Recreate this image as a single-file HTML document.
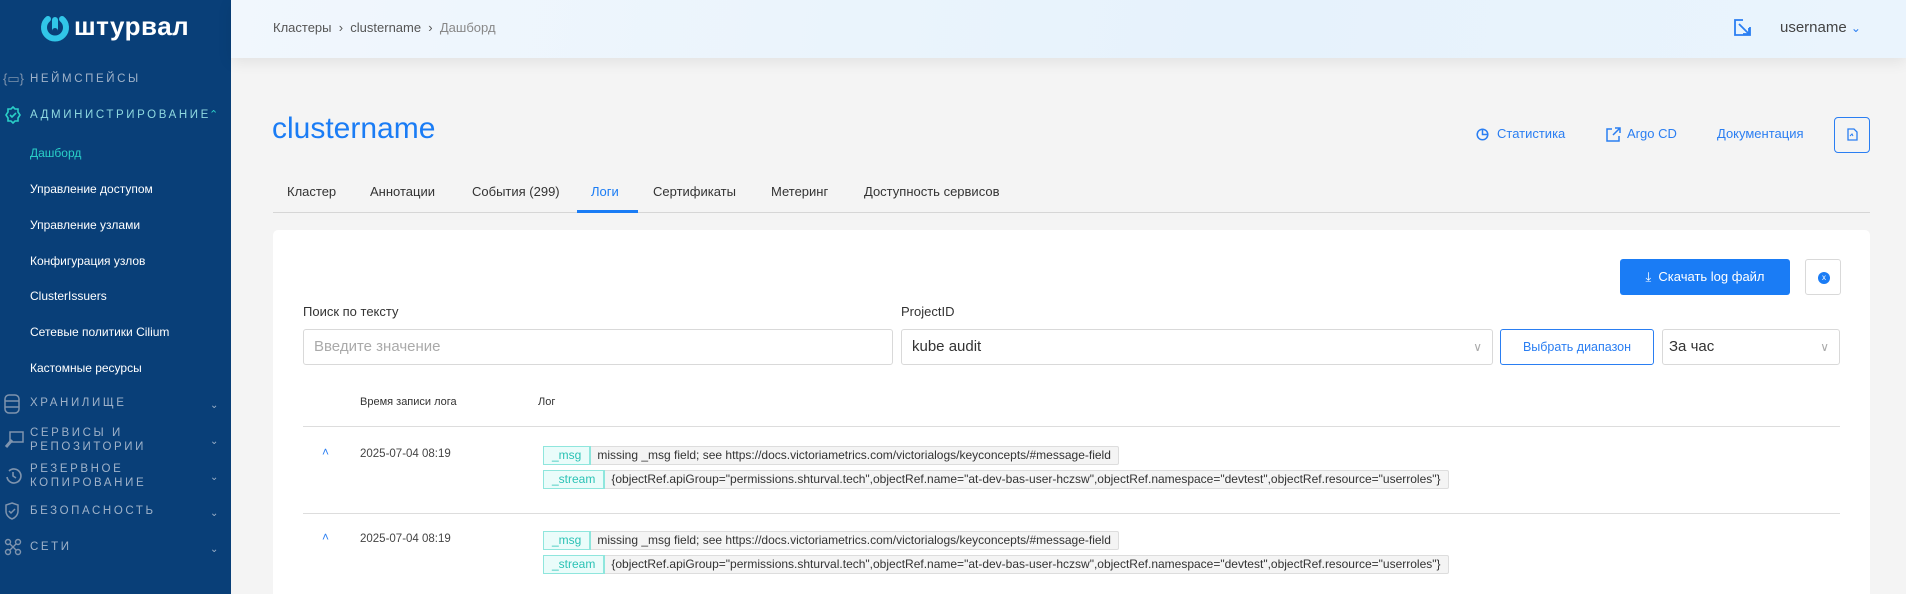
<!DOCTYPE html>
<html><head><meta charset="utf-8"><style>
*{box-sizing:border-box;margin:0;padding:0}
html{width:1906px;height:594px;overflow:hidden}
body{width:1906px;height:594px;overflow:hidden;background:#f4f4f4;font-family:"Liberation Sans",sans-serif;position:relative}
.abs{position:absolute}
#sb{left:0;top:0;width:231px;height:594px;background:#093f78}
.sec{position:absolute;left:30px;font-size:11.5px;letter-spacing:2.6px;color:#9fb2c9;text-transform:uppercase;line-height:14px}
.sub{position:absolute;left:30px;font-size:12px;color:#fff}
.chev{position:absolute;left:210px;color:#9fb2c9;font-size:10px}
.ico{position:absolute;left:4px}
#hdr{left:231px;top:0;width:1675px;height:58px;background:linear-gradient(100deg,#f1f7fd,#e6f2fc 60%,#eaf4fd);box-shadow:0 4px 14px rgba(0,0,0,.08)}
.lnk{position:absolute;top:126px;font-size:13px;color:#2a7ef2}
.tab{position:absolute;top:184px;font-size:13px;color:#333}
#card{left:273px;top:230px;width:1597px;height:364px;background:#fff;border-radius:5px 5px 0 0}
.inp{position:absolute;border:1px solid #d9d9d9;border-radius:3px;height:36px;top:329px;font-size:15px;line-height:34px;padding-left:10px}
.tag{position:absolute;height:19px;border:1px solid #ddd;border-radius:2px;background:#f4f4f4;font-size:12px;line-height:17px;color:#333;white-space:nowrap;display:flex}
.tag b{font-weight:normal;color:#2bc2b5;background:#eafcfa;border-right:1px solid #8fe6dd;padding:0 8px;outline:1px solid #8fe6dd}
.tag span{padding:0 7px}
.up{position:absolute;left:322px;color:#2a7ef2;font-size:12px}
.dt{position:absolute;left:360px;font-size:11.5px;color:#444}
</style></head><body>
<div id="sb" class="abs">
 <svg class="abs" style="left:40px;top:13px" width="30" height="30" viewBox="0 0 30 30"><path d="M8 6a11 11 0 1 0 14 0" stroke="#31c6e8" stroke-width="6" fill="none" stroke-linecap="round"/><rect x="12" y="4" width="6" height="16" rx="3" fill="#31c6e8"/><circle cx="15" cy="18" r="3" fill="#093f78"/></svg>
 <div class="abs" style="left:74px;top:11px;font-size:26px;font-weight:bold;color:#fff;letter-spacing:.5px">штурвал</div>
 <div class="abs" style="left:3px;top:71px;color:#7f94ae;font-size:13px">{▭}</div>
 <div class="sec" style="top:72px">Неймспейсы</div>
 <svg class="ico" style="top:106px" width="18" height="18" viewBox="0 0 18 18"><path d="M9 1l2 2h3v3l2 3-2 3v3h-3l-2 2-2-2H4v-3L2 9l2-3V3h3z" stroke="#2ad0c8" stroke-width="1.6" fill="none"/><path d="M6 9l2 2 4-4" stroke="#2ad0c8" stroke-width="1.6" fill="none"/></svg>
 <div class="sec" style="top:108px;color:#8fd9e0">Администрирование</div>
 <div class="abs" style="left:209px;top:108px;color:#2ad0c8;font-size:11px">⌃</div>
 <div class="sub" style="top:146px;color:#2ad0c8">Дашборд</div>
 <div class="sub" style="top:182px">Управление доступом</div>
 <div class="sub" style="top:218px">Управление узлами</div>
 <div class="sub" style="top:254px">Конфигурация узлов</div>
 <div class="sub" style="top:289px">ClusterIssuers</div>
 <div class="sub" style="top:325px">Сетевые политики Cilium</div>
 <div class="sub" style="top:361px">Кастомные ресурсы</div>
 <svg class="ico" style="top:394px" width="16" height="20" viewBox="0 0 16 20"><rect x="1" y="1" width="14" height="18" rx="4" stroke="#7f94ae" stroke-width="1.5" fill="none"/><path d="M1 7h14M1 13h14" stroke="#7f94ae" stroke-width="1.5"/></svg>
 <div class="sec" style="top:396px">Хранилище</div><div class="chev" style="top:400px">⌄</div>
 <svg class="ico" style="top:431px" width="20" height="18" viewBox="0 0 20 18"><rect x="6" y="1" width="13" height="10" stroke="#7f94ae" stroke-width="1.5" fill="none"/><path d="M2 16l6-7" stroke="#7f94ae" stroke-width="3"/></svg>
 <div class="sec" style="top:426px">Сервисы и<br>репозитории</div><div class="chev" style="top:436px">⌄</div>
 <svg class="ico" style="top:467px" width="18" height="18" viewBox="0 0 18 18"><path d="M3 10a7 7 0 1 0 2-6" stroke="#7f94ae" stroke-width="1.6" fill="none"/><path d="M9 5v4l3 2" stroke="#7f94ae" stroke-width="1.6" fill="none"/></svg>
 <div class="sec" style="top:462px">Резервное<br>копирование</div><div class="chev" style="top:472px">⌄</div>
 <svg class="ico" style="top:502px" width="16" height="18" viewBox="0 0 16 18"><path d="M8 1l6 2v6c0 4-3 7-6 8-3-1-6-4-6-8V3z" stroke="#7f94ae" stroke-width="1.5" fill="none"/><path d="M5 9l2 2 4-4" stroke="#7f94ae" stroke-width="1.5" fill="none"/></svg>
 <div class="sec" style="top:504px">Безопасность</div><div class="chev" style="top:508px">⌄</div>
 <svg class="ico" style="top:538px" width="18" height="18" viewBox="0 0 18 18"><circle cx="4" cy="14" r="2.5" stroke="#7f94ae" fill="none" stroke-width="1.4"/><circle cx="14" cy="4" r="2.5" stroke="#7f94ae" fill="none" stroke-width="1.4"/><circle cx="14" cy="14" r="2.5" stroke="#7f94ae" fill="none" stroke-width="1.4"/><circle cx="4" cy="4" r="2.5" stroke="#7f94ae" fill="none" stroke-width="1.4"/><path d="M6 6l6 6M12 6l-6 6" stroke="#7f94ae" stroke-width="1.4"/></svg>
 <div class="sec" style="top:540px">Сети</div><div class="chev" style="top:544px">⌄</div>
</div>
<div id="hdr" class="abs"></div>
<div class="abs" style="left:273px;top:20px;font-size:13px;color:#555">Кластеры &nbsp;›&nbsp; clustername &nbsp;›&nbsp; <span style="color:#888">Дашборд</span></div>
<svg class="abs" style="left:1734px;top:19px" width="17" height="17" viewBox="0 0 17 17"><path d="M9 1H1v15h15V8" stroke="#2a7ef2" stroke-width="1.8" fill="none"/><path d="M5 5l10 10M15 9v6H9" stroke="#2a7ef2" stroke-width="1.8" fill="none"/></svg>
<div class="abs" style="left:1780px;top:19px;font-size:15px;color:#444">username <span style="color:#2a7ef2;font-size:12px">⌄</span></div>

<div class="abs" style="left:272px;top:112px;font-size:30px;color:#1a7cf5">clustername</div>
<svg class="abs" style="left:1476px;top:128px" width="13" height="13" viewBox="0 0 13 13"><circle cx="6.5" cy="6.5" r="5.3" stroke="#2a7ef2" stroke-width="1.5" fill="none"/><path d="M6.5 1.2v5.3h5.3" stroke="#2a7ef2" stroke-width="1.5" fill="none"/></svg>
<div class="lnk" style="left:1497px">Статистика</div>
<svg class="abs" style="left:1606px;top:127px" width="15" height="15" viewBox="0 0 15 15"><path d="M6 2H1v12h12V9M9 1h5v5M14 1L7 8" stroke="#2a7ef2" stroke-width="1.5" fill="none"/></svg>
<div class="lnk" style="left:1627px">Argo CD</div>
<div class="lnk" style="left:1717px">Документация</div>
<div class="abs" style="left:1834px;top:117px;width:36px;height:36px;border:1px solid #2a7ef2;border-radius:4px"><svg class="abs" style="left:12px;top:10px" width="11" height="13" viewBox="0 0 11 13"><path d="M1 1h6l3 3v8H1z" stroke="#2a7ef2" stroke-width="1.3" fill="none"/><path d="M3 8l2-2 1 2" stroke="#2a7ef2" fill="none"/></svg></div>

<div class="tab" style="left:287px">Кластер</div>
<div class="tab" style="left:370px">Аннотации</div>
<div class="tab" style="left:472px">События (299)</div>
<div class="tab" style="left:591px;color:#1a7cf5">Логи</div>
<div class="tab" style="left:653px">Сертификаты</div>
<div class="tab" style="left:771px">Метеринг</div>
<div class="tab" style="left:864px">Доступность сервисов</div>
<div class="abs" style="left:273px;top:212px;width:1597px;height:1px;background:#d6d6d6"></div>
<div class="abs" style="left:577px;top:210px;width:61px;height:3px;background:#1a7cf5"></div>

<div id="card" class="abs"></div>
<div class="abs" style="left:1620px;top:259px;width:170px;height:36px;background:#1a7cf5;border-radius:3px;color:#fff;font-size:13px;line-height:36px;text-align:center">⤓ &nbsp;Скачать log файл</div>
<div class="abs" style="left:1805px;top:259px;width:36px;height:36px;border:1px solid #d9d9d9;border-radius:3px"><div class="abs" style="left:12px;top:12px;width:12px;height:12px;border-radius:50%;background:#1a7cf5;color:#fff;font-size:8px;line-height:12px;text-align:center">x</div></div>
<div class="abs" style="left:303px;top:304px;font-size:13px;color:#333">Поиск по тексту</div>
<div class="abs" style="left:901px;top:304px;font-size:13px;color:#333">ProjectID</div>
<div class="inp" style="left:303px;width:590px;color:#aaa">Введите значение</div>
<div class="inp" style="left:901px;width:592px;color:#333">kube audit<span class="abs" style="right:10px;top:0;color:#aaa;font-size:12px">∨</span></div>
<div class="inp" style="left:1500px;width:154px;border-color:#2a7ef2;color:#2a7ef2;font-size:12.5px;padding-left:0;text-align:center">Выбрать диапазон</div>
<div class="inp" style="left:1662px;width:178px;color:#333;padding-left:6px">За час<span class="abs" style="right:10px;top:0;color:#aaa;font-size:12px">∨</span></div>

<div class="abs" style="left:360px;top:396px;font-size:11px;color:#333">Время записи лога</div>
<div class="abs" style="left:538px;top:396px;font-size:11px;color:#333">Лог</div>
<div class="abs" style="left:303px;top:426px;width:1537px;height:1px;background:#ddd"></div>

<div class="up" style="top:445px">˄</div>
<div class="dt" style="top:448px">2025-07-04 08:19</div>
<div class="tag" style="left:543px;top:446px"><b>_msg</b><span>missing _msg field; see https://docs.victoriametrics.com/victorialogs/keyconcepts/#message-field</span></div>
<div class="tag" style="left:543px;top:470px"><b>_stream</b><span>{objectRef.apiGroup="permissions.shturval.tech",objectRef.name="at-dev-bas-user-hczsw",objectRef.namespace="devtest",objectRef.resource="userroles"}</span></div>
<div class="abs" style="left:303px;top:513px;width:1537px;height:1px;background:#ddd"></div>
<div class="up" style="top:530px">˄</div>
<div class="dt" style="top:533px">2025-07-04 08:19</div>
<div class="tag" style="left:543px;top:531px"><b>_msg</b><span>missing _msg field; see https://docs.victoriametrics.com/victorialogs/keyconcepts/#message-field</span></div>
<div class="tag" style="left:543px;top:555px"><b>_stream</b><span>{objectRef.apiGroup="permissions.shturval.tech",objectRef.name="at-dev-bas-user-hczsw",objectRef.namespace="devtest",objectRef.resource="userroles"}</span></div>
</body></html>
